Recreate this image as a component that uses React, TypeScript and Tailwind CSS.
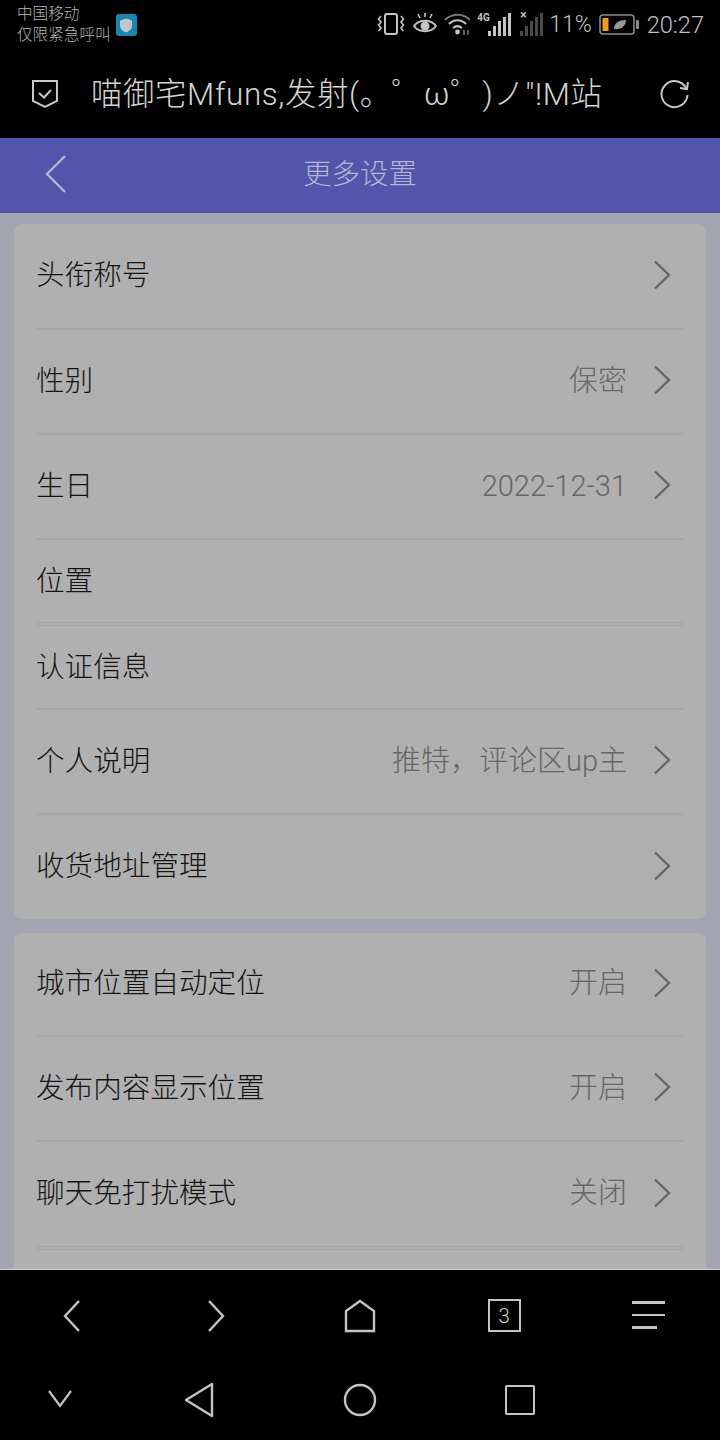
import React from "react";

const cjk = "font-['Roboto','Noto_Sans_CJK_SC',sans-serif]";

function Chevron() {
  return (
    <svg width="20" height="32" viewBox="0 0 20 32" fill="none" className="ml-[25px] mr-[11px] mb-[3px] shrink-0">
      <path d="M3 2.5 L17 16 L3 29.5" stroke="#666" strokeWidth="2.4" />
    </svg>
  );
}

type R = { label: string; value?: string; h: string; arrow?: boolean; line?: "none" | "single" | "double" };

function Row({ label, value, h, arrow = true, line = "single" }: R) {
  const border =
    line === "single"
      ? "border-b-2 border-[#a7a7a7]"
      : line === "double"
        ? "border-b-4 border-double border-[#a3a3a3]"
        : "";
  return (
    <div className={`flex items-center ${h} ${border}`}>
      <span className={`-ml-[1px] text-[28.6px] leading-[34px] font-light text-[#141414] flex-1 ${arrow ? "mb-[2px]" : ""}`}>{label}</span>
      {value && <span className="mb-[2px] text-[29px] leading-[34px] font-light text-[#666666]">{value}</span>}
      {arrow && <Chevron />}
    </div>
  );
}

function Signal({ dim }: { dim?: boolean }) {
  const c = dim ? "#4a4a4a" : "#c4c4c4";
  return (
    <svg width="24" height="24" viewBox="0 0 24 24" fill={c}>
      <rect x="0" y="19" width="3" height="5" />
      <rect x="5" y="14" width="3" height="10" />
      <rect x="10" y="9" width="3" height="15" />
      <rect x="15" y="5" width="3" height="19" />
      <rect x="20" y="1" width="3" height="23" />
    </svg>
  );
}

function StatusBar() {
  return (
    <div className="h-[58px] flex text-[#c2c2c2]">
      <div className="pl-[17px] pt-[4px] text-[15.6px] leading-[21px] font-light text-[#b5b5b5]">
        <div>中国移动</div>
        <div>仅限紧急呼叫</div>
      </div>
      <div className="ml-[5px] mt-[14px] w-[21px] h-[22px] rounded-[3px] bg-[#1b86ad] flex items-center justify-center">
        <svg width="14" height="15" viewBox="0 0 14 15"><path d="M7 0.5 L13 2.5 V8 C13 11 10 13.5 7 14.5 C4 13.5 1 11 1 8 V2.5 Z" fill="#bcc6cc" /></svg>
      </div>
      <div className="ml-auto pr-[16px] flex items-start pt-[12px]">
        <svg width="28" height="24" viewBox="0 0 28 24" fill="none" stroke="#c4c4c4" strokeWidth="2">
          <rect x="8" y="2" width="12" height="20" rx="2" />
          <path d="M4 4 L1.5 7 L4 10 L1.5 13 L4 16 L1.5 19 M24 4 L26.5 7 L24 10 L26.5 13 L24 16 L26.5 19" strokeWidth="1.6" />
        </svg>
        <svg width="24" height="24" viewBox="0 0 24 24" fill="none" stroke="#c4c4c4" strokeWidth="2" className="ml-[8px]">
          <path d="M1 14 C6 7 18 7 23 14 C18 21 6 21 1 14 Z" />
          <circle cx="12" cy="14" r="4.5" fill="#c4c4c4" stroke="none" />
          <path d="M5 2 L7 6 M12 1 V5 M19 2 L17 6" strokeWidth="1.6" />
        </svg>
        <svg width="27" height="24" viewBox="0 0 27 24" fill="none" stroke="#c4c4c4" strokeWidth="2" className="ml-[7px]">
          <path d="M1 8 C8 1 19 1 26 8" stroke="#777" />
          <path d="M5 12 C10 7 17 7 22 12" />
          <path d="M9 16 C12 13.5 15 13.5 18 16" />
          <circle cx="13.5" cy="20" r="2.4" fill="#c4c4c4" stroke="none" />
          <path d="M20 18 V23 M24 18 V23" stroke="#777" strokeWidth="1.6" />
        </svg>
        <div className="ml-[6px] relative w-[35px] h-[24px]">
          <span className="absolute left-0 top-0 text-[10px] leading-[11px] font-bold text-[#c4c4c4]">4G</span>
          <div className="absolute right-0 top-0"><Signal /></div>
        </div>
        <div className="ml-[8px] relative w-[24px] h-[24px]">
          <div className="absolute left-0 top-0"><Signal dim /></div>
          <span className="absolute left-0 top-[-3px] text-[12px] leading-[12px] font-bold text-[#c4c4c4]">×</span>
        </div>
        <span className="ml-[5px] text-[23px] leading-[26px] font-light">11%</span>
        <svg width="41" height="22" viewBox="0 0 41 22" fill="none" className="ml-[7px] mt-[2px]">
          <rect x="1" y="1" width="34" height="19" rx="3" stroke="#8a8a8a" strokeWidth="1.6" />
          <rect x="3.5" y="4" width="6" height="13" fill="#f39a1f" />
          <path d="M15 15 C15 9 20 6 27 6 C27 12 22 16 15 15 Z" fill="#9a9a9a" />
          <rect x="37" y="6" width="3" height="9" rx="1" fill="#8a8a8a" />
        </svg>
        <span className="ml-[7px] text-[23.6px] leading-[26px] font-light">20:27</span>
      </div>
    </div>
  );
}

function UrlBar() {
  return (
    <div className="h-[80px] flex items-center text-[#d4d4d4]">
      <svg width="28" height="30" viewBox="0 0 28 30" fill="none" stroke="#c8c8c8" strokeWidth="2" className="ml-[31px] mb-[8px] shrink-0">
        <path d="M2 2 H26 V22 L14 28 L2 22 Z" />
        <path d="M8 14 L13 18.5 L20 11" />
      </svg>
      <span className="ml-[32px] text-[31.4px] leading-[40px] tracking-[0.65px] font-light whitespace-nowrap mb-[6px] w-[521px] overflow-hidden">喵御宅Mfuns,发射(。゜ω゜)ノ"!M站</span>
      <svg width="32" height="30" viewBox="0 0 32 30" fill="none" stroke="#c8c8c8" strokeWidth="2" className="ml-[47px] mb-[6px] shrink-0">
        <path d="M27 8 A13 13 0 1 0 28.5 15" />
        <path d="M29 2 L28 9 L21 8" />
      </svg>
    </div>
  );
}

function Header() {
  return (
    <div className="h-[75px] bg-[#5355ad] flex items-center relative justify-center shrink-0">
      <svg width="24" height="40" viewBox="0 0 24 40" fill="none" stroke="#b4b5cf" strokeWidth="2.4" className="absolute left-[44px] top-[16px]">
        <path d="M21 2 L3 20 L21 38" />
      </svg>
      <span className="text-[28.4px] leading-[34px] font-light text-[#b4b5cf] mb-[2px]">更多设置</span>
    </div>
  );
}

function BottomBars() {
  const s = "#c4c4c4";
  return (
    <div className="bg-black shrink-0 border-t border-[#cfcfcf] h-[171px]">
      <div className="h-[89px] flex">
        {[
          <svg key="a" width="20" height="34" viewBox="0 0 20 34" fill="none" stroke={s} strokeWidth="2.4"><path d="M17 2 L3 17 L17 32" /></svg>,
          <svg key="b" width="20" height="34" viewBox="0 0 20 34" fill="none" stroke={s} strokeWidth="2.4"><path d="M3 2 L17 17 L3 32" /></svg>,
          <svg key="c" width="32" height="34" viewBox="0 0 32 34" fill="none" stroke={s} strokeWidth="2.4"><path d="M2 12 L16 2 L30 12 V32 H2 Z" /></svg>,
          <div key="d" className="w-[33px] h-[33px] border-2 border-[#c4c4c4] flex items-center justify-center text-[21px] leading-[22px] text-[#c4c4c4] font-light">3</div>,
          <div key="e" className="w-[33px] h-[28px] mb-[2px] flex flex-col justify-between">
            <div className="h-[3px] w-[33px] bg-[#c4c4c4]" />
            <div className="h-[2px] w-[33px] bg-[#c4c4c4]" />
            <div className="h-[3px] w-[25px] bg-[#c4c4c4]" />
          </div>,
        ].map((icon, i) => (
          <div key={i} className="w-[144px] flex items-center justify-center pt-[2px]">{icon}</div>
        ))}
      </div>
      <div className="h-[81px] flex">
        <div className="w-[120px] flex items-center justify-center pb-[2px]">
          <svg width="26" height="20" viewBox="0 0 26 20" fill="none" stroke={s} strokeWidth="2.2"><path d="M2 2 L13 17 L24 2" /></svg>
        </div>
        <div className="w-[160px] flex items-center justify-center">
          <svg width="32" height="36" viewBox="0 0 32 36" fill="none" stroke={s} strokeWidth="2.4" strokeLinejoin="round"><path d="M28 2 V34 L2 18 Z" /></svg>
        </div>
        <div className="w-[160px] flex items-center justify-center">
          <svg width="34" height="34" viewBox="0 0 34 34" fill="none" stroke={s} strokeWidth="2.4"><circle cx="17" cy="17" r="15" /></svg>
        </div>
        <div className="w-[160px] flex items-center justify-center">
          <div className="w-[30px] h-[30px] border-2 border-[#c4c4c4] rounded-[2px]" />
        </div>
      </div>
    </div>
  );
}

export default function App() {
  return (
    <div className={`w-[720px] h-[1440px] bg-black flex flex-col overflow-hidden ${cjk}`}>
      <StatusBar />
      <UrlBar />
      <Header />
      <div className="flex-1 min-h-0 overflow-hidden bg-[#a4a5b3] px-[14px] pt-[11px]">
        <div className="bg-[#b0b0b0] rounded-[8px] px-[23px]">
          <Row label="头衔称号" h="h-[106px]" />
          <Row label="性别" value="保密" h="h-[105px]" />
          <Row label="生日" value="2022-12-31" h="h-[105px]" />
          <Row label="位置" h="h-[86px]" arrow={false} line="double" />
          <Row label="认证信息" h="h-[84px]" arrow={false} />
          <Row label="个人说明" value="推特，评论区up主" h="h-[105px]" />
          <Row label="收货地址管理" h="h-[104px]" line="none" />
        </div>
        <div className="bg-[#b0b0b0] rounded-[8px] px-[23px] mt-[14px]">
          <Row label="城市位置自动定位" value="开启" h="h-[104px]" />
          <Row label="发布内容显示位置" value="开启" h="h-[105px]" />
          <Row label="聊天免打扰模式" value="关闭" h="h-[108px]" line="double" />
          <Row label="" h="h-[60px]" arrow={false} line="none" />
        </div>
      </div>
      <BottomBars />
    </div>
  );
}
